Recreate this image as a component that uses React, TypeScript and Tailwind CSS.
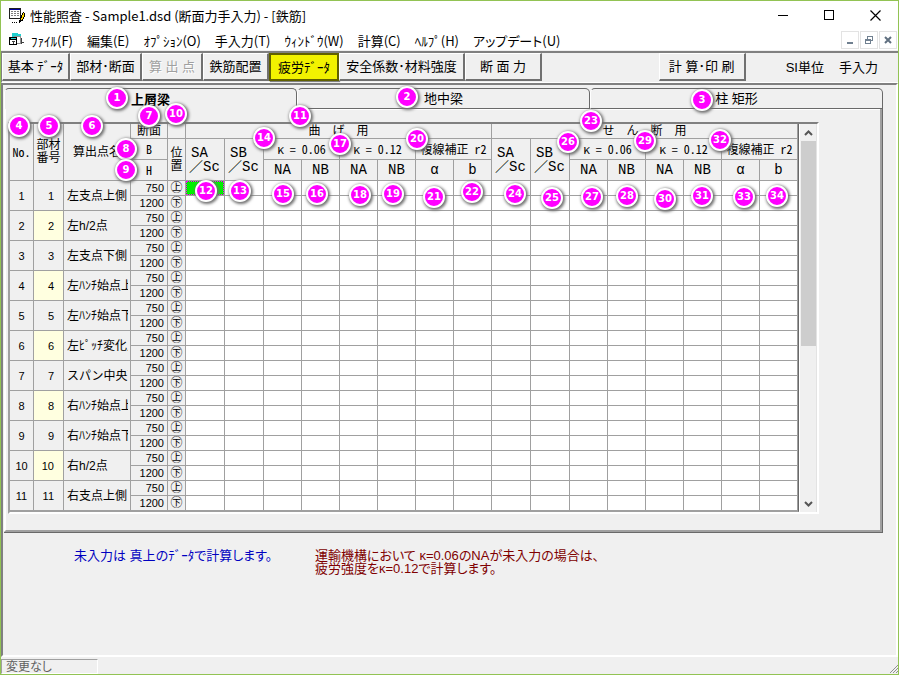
import React from "react";

const members = [
  "左支点上側",
  "左h/2点",
  "左支点下側",
  "左ﾊﾝﾁ始点上側",
  "左ﾊﾝﾁ始点下側",
  "左ﾋﾟｯﾁ変化点",
  "スパン中央下",
  "右ﾊﾝﾁ始点上側",
  "右ﾊﾝﾁ始点下側",
  "右h/2点",
  "右支点上側",
];

const menus = [
  "ﾌｧｲﾙ(F)",
  "編集(E)",
  "ｵﾌﾟｼｮﾝ(O)",
  "手入力(T)",
  "ｳｨﾝﾄﾞｳ(W)",
  "計算(C)",
  "ﾍﾙﾌﾟ(H)",
  "アップデート(U)",
];

const columnWidths = [
  "w-[24px]", "w-[30px]", "w-[67px]", "w-[37px]", "w-[18px]",
  "w-[39px]", "w-[39px]", "w-[38px]", "w-[38px]", "w-[38px]", "w-[38px]", "w-[38px]", "w-[38px]",
  "w-[39px]", "w-[39px]", "w-[38px]", "w-[38px]", "w-[38px]", "w-[38px]", "w-[38px]", "w-[38px]",
];

// Centre of each numbered callout, relative to the inside of the window frame.
const callouts: [number, number][] = [
  [116, 97], [406, 96], [701, 99], [18, 125], [48, 125], [91, 125], [148, 115],
  [125, 148], [125, 169], [175, 113], [299, 115], [205, 190], [239, 190], [263, 137],
  [282, 193], [316, 193], [339, 143], [359, 194], [392, 193], [416, 138], [433, 196],
  [471, 191], [590, 120], [514, 193], [551, 197], [567, 141], [591, 196], [626, 195],
  [644, 140], [664, 198], [701, 195], [719, 139], [743, 196], [776, 195],
];

const cell = "whitespace-nowrap border-r border-b border-[#a0a0a0] p-0 font-normal";
const half = "font-['Noto_Sans_CJK_JP',sans-serif] [font-feature-settings:'hwid']";
const digits = "text-[11px]";
const latin = "font-['Liberation_Mono','Noto_Sans_CJK_JP',monospace] text-[14px]";

function AppIcon() {
  return (
    <svg width="16" height="16" viewBox="0 0 16 16" shapeRendering="crispEdges" aria-hidden="true">
      <rect x="0" y="0" width="12" height="11" fill="#202020" />
      <rect x="1" y="2" width="10" height="8" fill="#fff" />
      <path d="M1 1.500h10" stroke="#0000a0" />
      <path d="M2 3.500h2M5 3.500h2M8 3.500h2M2 5.500h2M5 5.500h2M8 5.500h2M2 7.500h2M5 7.500h2M8 7.500h2" stroke="#808080" />
      <path d="M3 14.500h1M5 14.500h1M7 14.500h1" stroke="#000" />
      <path d="M15 5h1v4h-1zM14 4h1v1h-1zM14 9h1v2h-1zM13 5h1v2h-1zM13 11h1v2h-1zM12 7h1v3h-1zM12 12h1v1h-1zM11 9h1v5h-1zM10 12h1v3h-1z" fill="#000" />
      <path d="M14 5h1v4h-1zM13 7h1v4h-1zM12 10h1v2h-1z" fill="#ffd800" />
    </svg>
  );
}

function ChildIcon() {
  return (
    <svg width="16" height="14" viewBox="0 0 16 14" shapeRendering="crispEdges" aria-hidden="true">
      <path d="M3 0h6v1h3v3H3z" fill="#20d0d0" />
      <path d="M5 3h7v8H5z" fill="#909090" />
      <path d="M6 4h5v6H6z" fill="#fff" />
      <path d="M0 4h8v8H0z" fill="#000" />
      <path d="M1 7h6v4H1z" fill="#fff" />
      <path d="M2 5h5v1H2z" fill="#20d0d0" />
      <path d="M3 8h3v1H3zM4 8h1v3H4zM12 5h1v6h-1zM13 9h2v1h-2z" fill="#404040" />
    </svg>
  );
}

function ToolButton({ label, width, disabled, active }: { label: string; width: string; disabled?: boolean; active?: boolean }) {
  const tone = active
    ? "bg-[#f2f200] border-[#606000] border-2 shadow-[1px_1px_1px_#808080]"
    : "bg-[#f0f0f0] border-t-white border-l-white border-r-[#707070] border-b-[#707070] border-t border-l border-r-2 border-b-2";
  const text = disabled ? "text-[#a0a0a0] [text-shadow:1px_1px_0_#fff]" : "text-black";
  return (
    <button
      type="button"
      disabled={disabled}
      className={`flex h-[28px] shrink-0 items-center justify-center whitespace-nowrap text-[13px] leading-none ${width} ${tone} ${text}`}
    >
      {label}
    </button>
  );
}

function SectionHeads() {
  return (
    <>
      {["SA", "SB"].map((t) => (
        <th key={t} scope="col" rowSpan={2} className={`${cell} ${latin} pl-[3px] text-left`}>
          <span className="block pl-[2px] leading-[14px]">{t}</span>
          <span className="block leading-[14px]">／Sc</span>
        </th>
      ))}
      <th scope="colgroup" colSpan={2} className={`${cell} ${half}`}>κ = 0.06</th>
      <th scope="colgroup" colSpan={2} className={`${cell} ${half}`}>κ = 0.12</th>
      <th scope="colgroup" colSpan={2} className={`${cell} ${half}`}>複線補正 r2</th>
    </>
  );
}

function DataGrid() {
  return (
    <table className="w-[788px] shrink-0 table-fixed border-separate border-spacing-0 text-[12px] leading-[12px]">
      <colgroup>
        {columnWidths.map((w, i) => (
          <col key={i} className={w} />
        ))}
      </colgroup>
      <thead>
        <tr className="h-[15px]">
          <th scope="col" rowSpan={3} className={`${cell} ${half}`}>No.</th>
          <th scope="col" rowSpan={3} className={`${cell} leading-[13px]`}>部材<br />番号</th>
          <th scope="col" rowSpan={3} className={`${cell} pl-[9px] text-left`}>算出点名</th>
          <th scope="col" className={cell}>断面</th>
          <th className={cell} />
          <th scope="colgroup" colSpan={8} className={cell}>曲　げ　用</th>
          <th scope="colgroup" colSpan={8} className={cell}>せ　ん　断　用</th>
        </tr>
        <tr className="h-[21px]">
          <th scope="col" className={`${cell} ${half}`}>B</th>
          <th scope="col" rowSpan={2} className={`${cell} leading-[13px]`}>位<br />置</th>
          <SectionHeads />
          <SectionHeads />
        </tr>
        <tr className="h-[21px]">
          <th scope="col" className={`${cell} ${half}`}>H</th>
          {["NA", "NB", "NA", "NB", "α", "b", "NA", "NB", "NA", "NB", "α", "b"].map((t, i) => (
            <th key={i} scope="col" className={`${cell} ${latin}`}>{t}</th>
          ))}
        </tr>
      </thead>
      <tbody>
        {members.map((name, i) => (
          <React.Fragment key={name}>
            <tr className="h-[15px]">
              <td rowSpan={2} className={`${cell} ${digits} text-center`}>{i + 1}</td>
              <td rowSpan={2} className={`${cell} ${digits} pr-[9px] text-right ${i % 2 ? "bg-[#ffffe0]" : ""}`}>{i + 1}</td>
              <td rowSpan={2} className={`${cell} pr-[2px] pl-[3px]`}>
                <div className="overflow-hidden leading-[18px]">{name}</div>
              </td>
              <td className={`${cell} ${digits} pr-[3px] text-right`}>750</td>
              <td className={`${cell} text-center`}>㊤</td>
              {Array.from({ length: 16 }, (_, c) => (
                <td key={c} className={`${cell} bg-white`}>
                  {i === 0 && c === 0 && (
                    <input
                      aria-label="左支点上側 SA／Sc"
                      className="block h-[14px] w-full border border-dotted border-[#ff00ff] bg-[#00f000] p-0 outline-none"
                    />
                  )}
                </td>
              ))}
            </tr>
            <tr className="h-[15px]">
              <td className={`${cell} ${digits} pr-[3px] text-right`}>1200</td>
              <td className={`${cell} text-center`}>㊦</td>
              {Array.from({ length: 16 }, (_, c) => (
                <td key={c} className={`${cell} bg-white`} />
              ))}
            </tr>
          </React.Fragment>
        ))}
      </tbody>
    </table>
  );
}

function ScrollBar() {
  return (
    <div className="flex w-[18px] flex-col items-center border-r border-l border-r-[#e3e3e3] border-l-white">
      <button type="button" aria-label="上へ" className="flex h-[17px] w-[15px] items-center justify-center">
        <svg width="9" height="6" viewBox="0 0 9 6"><path d="M1 5l3.500-3.500L8 5" fill="none" stroke="#555" strokeWidth="2" /></svg>
      </button>
      <div className="h-[205px] w-[15px] bg-[#cdcdcd]" />
      <div className="grow" />
      <button type="button" aria-label="下へ" className="flex h-[17px] w-[15px] items-center justify-center">
        <svg width="9" height="6" viewBox="0 0 9 6"><path d="M1 1l3.500 3.500L8 1" fill="none" stroke="#555" strokeWidth="2" /></svg>
      </button>
    </div>
  );
}

export default function App() {
  const childButton = "flex h-[18px] w-[18px] items-center justify-center border border-[#e3e3e3] bg-white";
  const tab = "flex h-full flex-1 items-center justify-center rounded-t-[5px] border-r border-l border-t border-t-[#696969] border-r-[#696969] border-l-white";
  return (
    <div className="relative flex h-screen flex-col overflow-hidden border border-[#92c353] bg-[#f0f0f0] font-['Liberation_Sans','Noto_Sans_CJK_JP',sans-serif] text-[13px] leading-none text-black">
      <header className="bg-white font-['Noto_Sans_CJK_JP',sans-serif]">
        <div className="flex h-[29px] items-center pl-2">
          <AppIcon />
          <h1 className="grow pl-[5px] text-[13px]">性能照査 - Sample1.dsd (断面力手入力) - [鉄筋]</h1>
          <button type="button" aria-label="最小化" className="flex h-full w-[46px] items-center justify-center">
            <svg width="11" height="11" shapeRendering="crispEdges"><path d="M0 5.500h10" stroke="#000" /></svg>
          </button>
          <button type="button" aria-label="最大化" className="flex h-full w-[46px] items-center justify-center">
            <svg width="11" height="11" shapeRendering="crispEdges"><path d="M.5.500h9v9h-9z" fill="none" stroke="#000" /></svg>
          </button>
          <button type="button" aria-label="閉じる" className="flex h-full w-[46px] items-center justify-center">
            <svg width="11" height="11"><path d="M.5.500l10 10M10.500.500l-10 10" stroke="#000" strokeWidth="1.200" /></svg>
          </button>
        </div>
        <div className="flex h-[20px] items-center pl-2">
          <ChildIcon />
          <nav className="flex grow gap-[14px] pl-[6px] [font-feature-settings:'palt']">
            {menus.map((m) => (
              <button key={m} type="button" className="whitespace-nowrap text-[13px]">{m}</button>
            ))}
          </nav>
          <div className="flex gap-[1px] pr-[1px]">
            <button type="button" aria-label="子ウィンドウを最小化" className={childButton}>
              <svg width="10" height="10" shapeRendering="crispEdges"><path d="M2 8h6" stroke="#708090" strokeWidth="2" /></svg>
            </button>
            <button type="button" aria-label="子ウィンドウを元に戻す" className={childButton}>
              <svg width="10" height="10" shapeRendering="crispEdges"><path d="M3 1.500h6M8.500 1v5M3.500 1v3M1 4.500h6M1 5.500h6M1.500 4v5M6.500 4v5M1 8.500h6M7 5.500h2" fill="none" stroke="#708090" /></svg>
            </button>
            <button type="button" aria-label="子ウィンドウを閉じる" className={childButton}>
              <svg width="10" height="10"><path d="M2 2l6 6M8 2L2 8" stroke="#607080" strokeWidth="2" /></svg>
            </button>
          </div>
        </div>
      </header>

      <div className="mt-px flex h-[32px] shrink-0 items-start border-t-2 border-b border-l border-t-[#808080] border-b-white border-l-[#808080]">
        <ToolButton label="基本 ﾃﾞｰﾀ" width="w-[68px]" />
        <ToolButton label="部材･断面" width="w-[72px]" />
        <ToolButton label="算 出 点" width="w-[61px]" disabled />
        <ToolButton label="鉄筋配置" width="w-[66px]" />
        <ToolButton label="疲労ﾃﾞｰﾀ" width="w-[70px]" active />
        <ToolButton label="安全係数･材料強度" width="w-[126px]" />
        <ToolButton label="断 面 力" width="w-[77px]" />
        <div className="grow" />
        <ToolButton label="計 算･印 刷" width="w-[87px]" />
        <div className="flex h-full items-center gap-[15px] pr-5 pl-10">
          <span>SI単位</span>
          <span>手入力</span>
        </div>
      </div>

      <main className="flex min-h-0 grow flex-col border-2 border-t-[#808080] border-r-white border-b-white border-l-[#808080] pt-[3px] pr-[13px] pl-px">
        <div role="tablist" className="flex h-[21px] shrink-0">
          <button type="button" role="tab" aria-selected="true" className={`${tab} font-bold`}>上層梁</button>
          <button type="button" role="tab" aria-selected="false" className={`${tab} border-b border-b-[#696969] shadow-[0_1px_0_#fff]`}>地中梁</button>
          <button type="button" role="tab" aria-selected="false" className={`${tab} border-b border-b-[#696969] shadow-[0_1px_0_#fff]`}>柱 矩形</button>
        </div>
        <section className="shrink-0 border-r border-b border-[#696969]">
          <div className="flex border-r-2 border-b-2 border-l-2 border-r-[#a0a0a0] border-b-[#a0a0a0] border-l-white pt-[13px] pb-4 pl-[2px]">
            <div className="flex border-2 border-t-[#808080] border-r-white border-b-white border-l-[#a0a0a0]">
              <div className="border-r border-b border-r-[#696969] border-b-[#a0a0a0]">
                <DataGrid />
              </div>
              <ScrollBar />
            </div>
          </div>
        </section>
        <div className="flex pt-4 pl-[70px] leading-[13px] [font-feature-settings:'palt']">
          <p className="w-[241px] shrink-0 whitespace-nowrap text-[#0000c0]">未入力は 真上のﾃﾞｰﾀで計算します。</p>
          <p className="whitespace-nowrap text-[#800000]">
            運輸機構において κ=0.06のNAが未入力の場合は、<br />疲労強度をκ=0.12で計算します。
          </p>
        </div>
      </main>

      <footer className="flex h-[17px] shrink-0 items-end justify-between pt-[2px]">
        <div className="flex h-[15px] w-[97px] items-center border border-t-[#a0a0a0] border-r-white border-b-white border-l-[#a0a0a0] pl-1 text-[12px] text-[#606060] [font-feature-settings:'palt']">
          変更なし
        </div>
        <svg width="9" height="13" viewBox="0 0 9 13" aria-hidden="true"><path d="M1 12l8-8M4 12l5-5M7 12l2-2" stroke="#909090" /></svg>
      </footer>

      {callouts.map(([x, y], i) => (
        <span
          key={i}
          className="absolute flex h-[22px] w-[22px] -translate-x-1/2 -translate-y-1/2 items-center justify-center rounded-full border-2 border-white bg-[#ff00ff] font-['DejaVu_Sans',sans-serif] text-[10px] font-bold text-white shadow-[1px_1px_3px_1px_#707070]"
          style={{ left: x, top: y }}
        >
          {i + 1}
        </span>
      ))}
    </div>
  );
}
